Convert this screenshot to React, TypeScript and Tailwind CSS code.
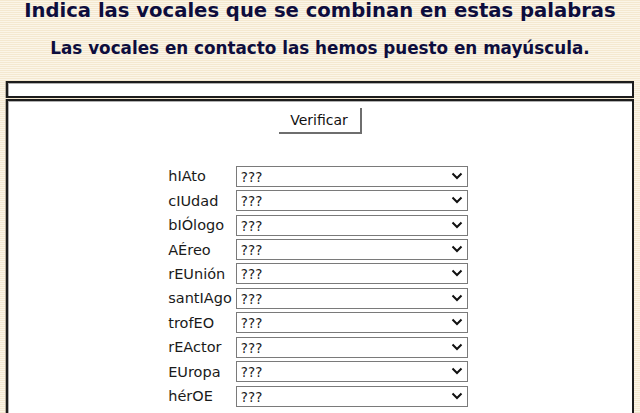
import React from 'react';

const WORDS = ['hIAto', 'cIUdad', 'bIÓlogo', 'AÉreo', 'rEUnión', 'santIAgo', 'trofEO', 'rEActor', 'EUropa', 'hérOE'];

function Chevron() {
  return (
    <svg width="12" height="8" viewBox="0 0 12 8" className="pointer-events-none absolute right-[5px] top-[7px]">
      <path d="M1.5 1.5 L6 6 L10.5 1.5" fill="none" stroke="#111" strokeWidth="2" />
    </svg>
  );
}

export default function App() {
  return (
    <div className="min-h-[413px] bg-[repeating-linear-gradient(180deg,#f4e8d0_0px,#f4e8d0_1px,#fbf5e8_1px,#fbf5e8_2px)] px-[6px] font-['DejaVu_Sans',Verdana,sans-serif]">
      <h1 className="text-center text-[19.6px] leading-[21px] font-bold text-[#0d0d3d]">
        Indica las vocales que se combinan en estas palabras
      </h1>
      <h2 className="mt-[17px] text-center text-[16.8px] leading-[20px] font-bold text-[#0d0d3d]">
        Las vocales en contacto las hemos puesto en mayúscula.
      </h2>

      <div className="mt-[23px] h-[17px] border-2 border-[#1c1c1c] bg-white shadow-[inset_1px_1px_0_#b0b0b0,-1px_0_0_#b8b0a0]" />

      <div className="mt-[1px] border-2 border-b-0 border-[#1c1c1c] bg-white pb-[12px] shadow-[inset_1px_1px_0_#b0b0b0,-1px_0_0_#b8b0a0]">
        <div className="flex justify-center pt-[7px]">
          <button className="h-[26px] w-[83px] border-r-2 border-b-2 border-[#6e6e6e] bg-white text-[14px] text-[#111]">
            Verificar
          </button>
        </div>

        <div className="mt-[29px] flex justify-center pr-[4px]">
          <div className="grid grid-cols-[auto_232px] auto-rows-[24.45px] items-center gap-x-[4px]">
            {WORDS.map(w => (
              <React.Fragment key={w}>
                <span className="pt-[2px] text-[14.5px] leading-[18px] text-[#1a1a1a]">{w}</span>
                <div className="relative h-[21px]">
                  <select className="h-[21px] w-full appearance-none border border-[#7a7a7a] bg-white pl-[4px] text-[13.5px] text-[#1a1a1a] font-['DejaVu_Sans',Verdana,sans-serif]">
                    <option>???</option>
                  </select>
                  <Chevron />
                </div>
              </React.Fragment>
            ))}
          </div>
        </div>
      </div>
    </div>
  );
}
